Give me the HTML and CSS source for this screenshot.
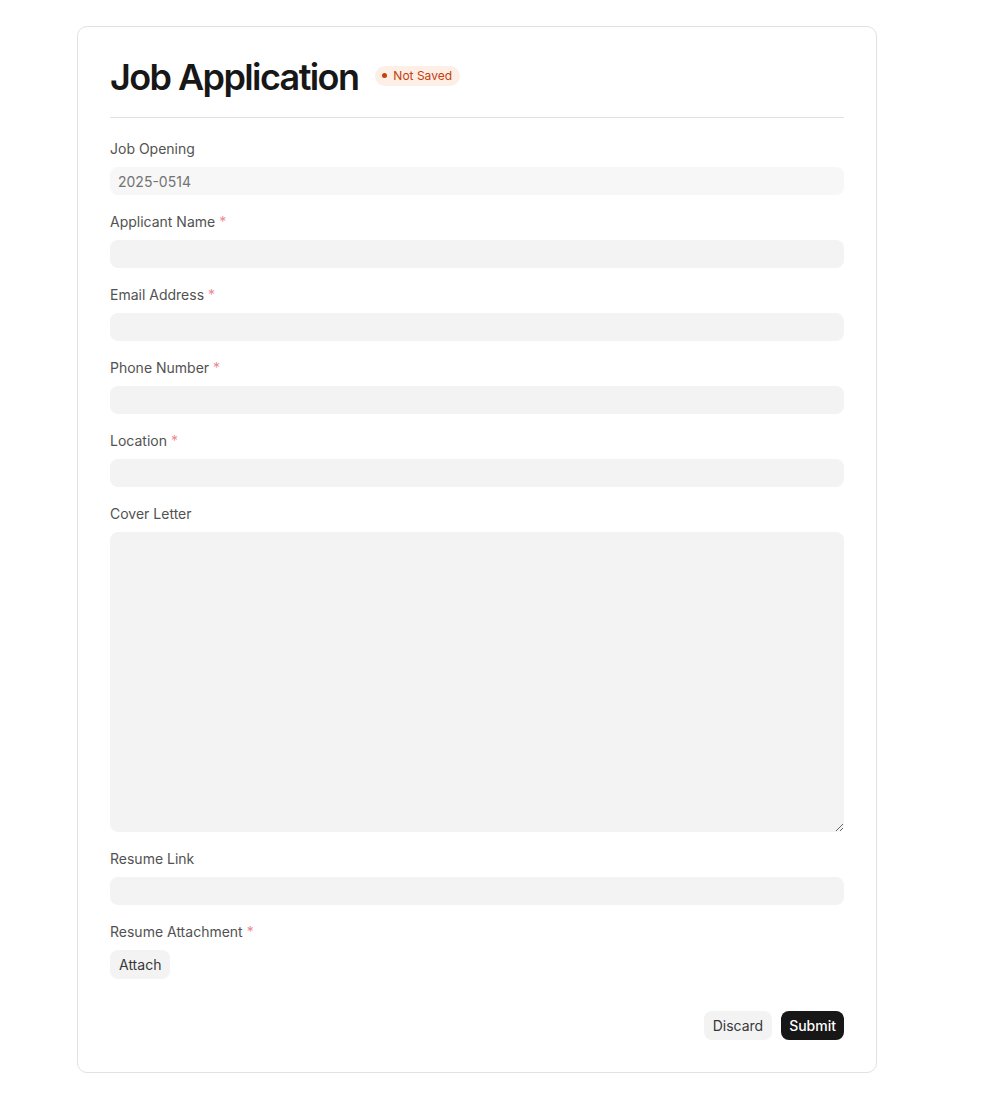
FILE: index.html
```html
<!DOCTYPE html>
<html lang="en">
<head>
    <meta charset="UTF-8">
    <meta name="viewport" content="width=device-width, initial-scale=1.0">
    <title>Job Application</title>
    <link rel="stylesheet" href="styles.css">
</head>
<body>
    <div class="card">
        <div class="header">
            <h1>Job Application</h1>
            <span class="badge"><span class="dot"></span>Not Saved</span>
        </div>
        <form class="fields" onsubmit="return false">
            <div class="field">
                <label>Job Opening</label>
                <input type="text" value="2025-0514" disabled>
            </div>
            <div class="field">
                <label>Applicant Name <span class="req">*</span></label>
                <input type="text">
            </div>
            <div class="field">
                <label>Email Address <span class="req">*</span></label>
                <input type="email">
            </div>
            <div class="field">
                <label>Phone Number <span class="req">*</span></label>
                <input type="text">
            </div>
            <div class="field">
                <label>Location <span class="req">*</span></label>
                <input type="text">
            </div>
            <div class="field">
                <label>Cover Letter</label>
                <textarea></textarea>
            </div>
            <div class="field">
                <label>Resume Link</label>
                <input type="text">
            </div>
            <div class="field">
                <label>Resume Attachment <span class="req">*</span></label>
                <div><button type="button" class="btn btn-light">Attach</button></div>
            </div>
            <div class="actions">
                <button type="button" class="btn btn-light">Discard</button>
                <button type="submit" class="btn btn-dark">Submit</button>
            </div>
        </form>
    </div>
</body>
</html>
```

FILE: styles.css
```css
body { font-family: 'Inter', sans-serif; background: #fff; margin: 0; padding: 26px 0 37px 77px; color: #171717; }
.card { width: 800px; box-sizing: border-box; padding: 32px; border: 1px solid #e2e2e2; border-radius: 10px; background: #fff; }
.header { display: flex; align-items: center; gap: 17px; padding-bottom: 22px; border-bottom: 1px solid #e2e2e2; margin-bottom: 21px; }
h1 { font-size: 36px; font-weight: 600; letter-spacing: -1.6px; line-height: 36px; margin: 0; color: #171717; }
.badge { display: inline-flex; align-items: center; gap: 6px; height: 20px; padding: 0 8px 0 7px; margin-bottom: 3px; border-radius: 10px; background: #fdeee6; color: #c2410c; font-size: 12px; }
.dot { width: 5px; height: 5px; border-radius: 50%; background: #c2410c; }
.fields { display: flex; flex-direction: column; gap: 17px; }
.field { display: flex; flex-direction: column; }
label { font-size: 14px; line-height: 20px; color: #525252; margin-bottom: 8px; }
.req { color: #ec8a94; }
input, textarea { font-family: 'Inter', sans-serif; font-size: 14px; color: #171717; background: #f3f3f3; border: none; border-radius: 8px; height: 28px; padding: 0 8px; box-sizing: border-box; width: 100%; outline: none; }
input:disabled { background: #f7f7f7; color: #737373; }
textarea { height: 300px; padding: 8px; resize: vertical; display: block; }
.btn { font-family: 'Inter', sans-serif; font-size: 14px; height: 29px; padding: 0 9px; border: none; border-radius: 8px; cursor: pointer; }
.btn-light { background: #f3f3f3; color: #383838; }
.btn-dark { background: #171717; color: #fff; font-weight: 500; padding: 0 8px; }
.actions { display: flex; justify-content: flex-end; gap: 9px; margin-top: 15px; }
```
